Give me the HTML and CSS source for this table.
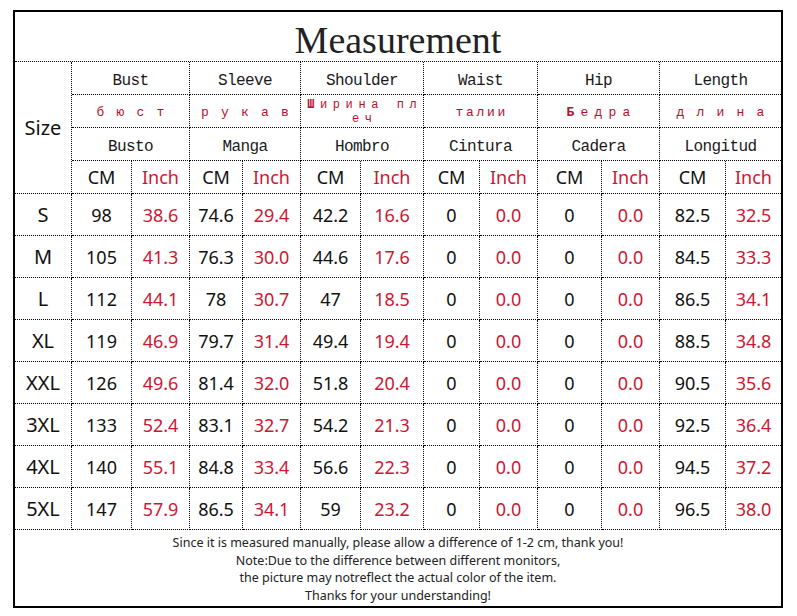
FILE: index.html
```html
<!DOCTYPE html>
<html>
<head>
<meta charset="utf-8">
<link rel="stylesheet" href="styles.css">
</head>
<body>
<div class="sheet">
  <div class="title">Measurement</div>

  <div class="size">Size</div>
  <div class="g en">Bust</div>
  <div class="g en">Sleeve</div>
  <div class="g en">Shoulder</div>
  <div class="g en">Waist</div>
  <div class="g en">Hip</div>
  <div class="g en e">Length</div>

  <div class="g ru ru-wide">бюст</div>
  <div class="g ru ru-wide">рукав</div>
  <div class="g ru ru-two"><span><b>Ш</b>ирина пл</span><span>еч</span></div>
  <div class="g ru ru-tight">талии</div>
  <div class="g ru ru-mid"><b>Б</b>едра</div>
  <div class="g ru ru-wide e">длина</div>

  <div class="g en">Busto</div>
  <div class="g en">Manga</div>
  <div class="g en">Hombro</div>
  <div class="g en">Cintura</div>
  <div class="g en">Cadera</div>
  <div class="g en e">Longitud</div>

  <div class="u">CM</div><div class="u r">Inch</div>
  <div class="u">CM</div><div class="u r">Inch</div>
  <div class="u">CM</div><div class="u r">Inch</div>
  <div class="u">CM</div><div class="u r">Inch</div>
  <div class="u">CM</div><div class="u r">Inch</div>
  <div class="u">CM</div><div class="u r e">Inch</div>

  <div class="s">S</div>
  <div class="n">98</div><div class="n r">38.6</div><div class="n">74.6</div><div class="n r">29.4</div><div class="n">42.2</div><div class="n r">16.6</div><div class="n">0</div><div class="n r">0.0</div><div class="n">0</div><div class="n r">0.0</div><div class="n">82.5</div><div class="n r e">32.5</div>

  <div class="s">M</div>
  <div class="n">105</div><div class="n r">41.3</div><div class="n">76.3</div><div class="n r">30.0</div><div class="n">44.6</div><div class="n r">17.6</div><div class="n">0</div><div class="n r">0.0</div><div class="n">0</div><div class="n r">0.0</div><div class="n">84.5</div><div class="n r e">33.3</div>

  <div class="s">L</div>
  <div class="n">112</div><div class="n r">44.1</div><div class="n">78</div><div class="n r">30.7</div><div class="n">47</div><div class="n r">18.5</div><div class="n">0</div><div class="n r">0.0</div><div class="n">0</div><div class="n r">0.0</div><div class="n">86.5</div><div class="n r e">34.1</div>

  <div class="s">XL</div>
  <div class="n">119</div><div class="n r">46.9</div><div class="n">79.7</div><div class="n r">31.4</div><div class="n">49.4</div><div class="n r">19.4</div><div class="n">0</div><div class="n r">0.0</div><div class="n">0</div><div class="n r">0.0</div><div class="n">88.5</div><div class="n r e">34.8</div>

  <div class="s">XXL</div>
  <div class="n">126</div><div class="n r">49.6</div><div class="n">81.4</div><div class="n r">32.0</div><div class="n">51.8</div><div class="n r">20.4</div><div class="n">0</div><div class="n r">0.0</div><div class="n">0</div><div class="n r">0.0</div><div class="n">90.5</div><div class="n r e">35.6</div>

  <div class="s">3XL</div>
  <div class="n">133</div><div class="n r">52.4</div><div class="n">83.1</div><div class="n r">32.7</div><div class="n">54.2</div><div class="n r">21.3</div><div class="n">0</div><div class="n r">0.0</div><div class="n">0</div><div class="n r">0.0</div><div class="n">92.5</div><div class="n r e">36.4</div>

  <div class="s">4XL</div>
  <div class="n">140</div><div class="n r">55.1</div><div class="n">84.8</div><div class="n r">33.4</div><div class="n">56.6</div><div class="n r">22.3</div><div class="n">0</div><div class="n r">0.0</div><div class="n">0</div><div class="n r">0.0</div><div class="n">94.5</div><div class="n r e">37.2</div>

  <div class="s">5XL</div>
  <div class="n">147</div><div class="n r">57.9</div><div class="n">86.5</div><div class="n r">34.1</div><div class="n">59</div><div class="n r">23.2</div><div class="n">0</div><div class="n r">0.0</div><div class="n">0</div><div class="n r">0.0</div><div class="n">96.5</div><div class="n r e">38.0</div>

  <div class="note">
    <span>Since it is measured manually, please allow a difference of 1-2 cm, thank you!</span>
    <span>Note:Due to the difference between different monitors,</span>
    <span>the picture may notreflect the actual color of the item.</span>
    <span>Thanks for your understanding!</span>
  </div>
</div>
</body>
</html>
```

FILE: styles.css
```css
body {
  margin: 0;
  background: #fff;
}

.sheet {
  margin: 10px 0 0 13px;
  width: 770px;
  height: 598px;
  box-sizing: border-box;
  border: 2px solid #000;
  display: grid;
  grid-template-columns: 57px 60px 58px 53px 58px 60px 63px 56px 58px 64px 58px 66px 55px;
  grid-template-rows: 50px 33px 33px 33px 33px repeat(8, 42px) 76px;
  color: #111;
}

.sheet > div {
  box-sizing: border-box;
  border-right: 1px dotted #000;
  border-bottom: 1px dotted #000;
  display: flex;
  align-items: center;
  justify-content: center;
  white-space: nowrap;
}

.sheet > .e {
  border-right: none;
}

.sheet > .title {
  grid-column: span 13;
  border-right: none;
  font-family: "Liberation Serif", serif;
  font-size: 38px;
  padding-top: 6px;
  color: #222;
}

.sheet > .size {
  grid-row: span 4;
  font-family: "Noto Sans", sans-serif;
  font-size: 20px;
  color: #111;
  padding-top: 0;
}

.g {
  grid-column: span 2;
}

.sheet > .en {
  font-family: "Liberation Mono", monospace;
  font-size: 16px;
  letter-spacing: -0.6px;
  color: #1a1a1a;
  padding-top: 5px;
}

.sheet > .ru {
  font-family: "Liberation Mono", monospace;
  font-size: 13px;
  color: #b8102e;
  padding-top: 3px;
}

.ru b {
  font-weight: bold;
}

.sheet > .ru-wide {
  letter-spacing: 12.2px;
  padding-left: 12.2px;
}

.sheet > .ru-mid {
  letter-spacing: 6.2px;
  padding-left: 6.2px;
}

.sheet > .ru-tight {
  letter-spacing: 2.7px;
  padding-left: 2.7px;
}

.sheet > .ru-two {
  flex-direction: column;
  font-size: 12px;
  line-height: 14px;
  letter-spacing: 5.6px;
  padding-left: 5.6px;
  padding-top: 1px;
}

.u,
.n {
  font-family: "Noto Sans", sans-serif;
  font-size: 18px;
  color: #111;
}

.s {
  font-family: "Noto Sans", sans-serif;
  font-size: 20px;
  color: #111;
}

.sheet > .r {
  color: #cc1733;
}

.sheet > .note {
  grid-column: span 13;
  border: none;
  flex-direction: column;
  justify-content: flex-start;
  padding-top: 4px;
  font-family: "Noto Sans", sans-serif;
  font-size: 12.5px;
  line-height: 17.5px;
  color: #222;
}
```
